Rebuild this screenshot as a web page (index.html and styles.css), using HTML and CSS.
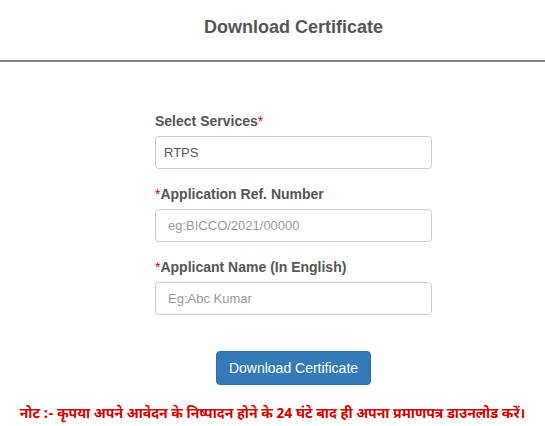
FILE: index.html
```html
<!DOCTYPE html>
<html lang="hi">
<head>
<meta charset="utf-8">
<title>Download Certificate</title>
<link rel="stylesheet" href="styles.css">
</head>
<body>
<header class="page-head">
  <div class="col">
    <h1 class="title">Download Certificate</h1>
  </div>
</header>
<main class="page-body">
  <form class="col form">
    <div class="group">
      <label class="label">Select Services<span class="req">*</span></label>
      <select class="control select"><option>RTPS</option></select>
    </div>
    <div class="group">
      <label class="label"><span class="req">*</span>Application Ref. Number</label>
      <input class="control" type="text" placeholder="eg:BICCO/2021/00000">
    </div>
    <div class="group">
      <label class="label"><span class="req">*</span>Applicant Name (In English)</label>
      <input class="control" type="text" placeholder="Eg:Abc Kumar">
    </div>
    <div class="actions">
      <button class="btn" type="button">Download Certificate</button>
    </div>
  </form>
  <p class="note">नोट :- कृपया अपने आवेदन के निष्पादन होने के 24 घंटे बाद ही अपना प्रमाणपत्र डाउनलोड करें।</p>
</main>
</body>
</html>
```
FILE: styles.css
```css
* { box-sizing: border-box; }
html, body { margin: 0; padding: 0; background: #fff; }
body {
  font-family: "Liberation Sans", Arial, sans-serif;
  font-size: 14px;
  line-height: 20px;
  color: #555;
}
.page-head {
  height: 62px;
  padding-top: 17px;
  border-bottom: 2px solid #808080;
}
.col {
  width: 277px;
  margin-left: 155px;
}
.title {
  margin: 0;
  font-size: 18px;
  line-height: 20px;
  font-weight: bold;
  color: #555;
  text-align: center;
}
.page-body { padding-top: 49px; }
.group { margin-bottom: 15px; }
.label {
  display: block;
  font-weight: bold;
  color: #555;
  margin-bottom: 5px;
}
.req { color: #c00; font-weight: normal; }
.control {
  display: block;
  width: 100%;
  height: 33px;
  padding: 6px 12px;
  border: 1px solid #ccc;
  border-radius: 4px;
  background: #fff;
  font-family: "Liberation Sans", Arial, sans-serif;
  font-size: 13px;
  color: #555;
  outline: none;
}
.select {
  appearance: none;
  -webkit-appearance: none;
  padding-left: 8px;
}
.control::placeholder { color: #999; }
.actions {
  display: flex;
  justify-content: center;
  padding-top: 21px;
}
.btn {
  height: 34px;
  padding: 6px 12px;
  border: 1px solid #2e6da4;
  border-radius: 4px;
  background: #337ab7;
  color: #fff;
  font-family: "Liberation Sans", Arial, sans-serif;
  font-size: 14px;
  line-height: 20px;
}
.note {
  margin: 20px 0 0;
  text-align: center;
  color: #d40000;
  font-weight: bold;
  font-size: 14px;
  font-family: "Noto Sans Devanagari", "Lohit Devanagari", "Noto Sans", sans-serif;
  line-height: 20px;
}
```
